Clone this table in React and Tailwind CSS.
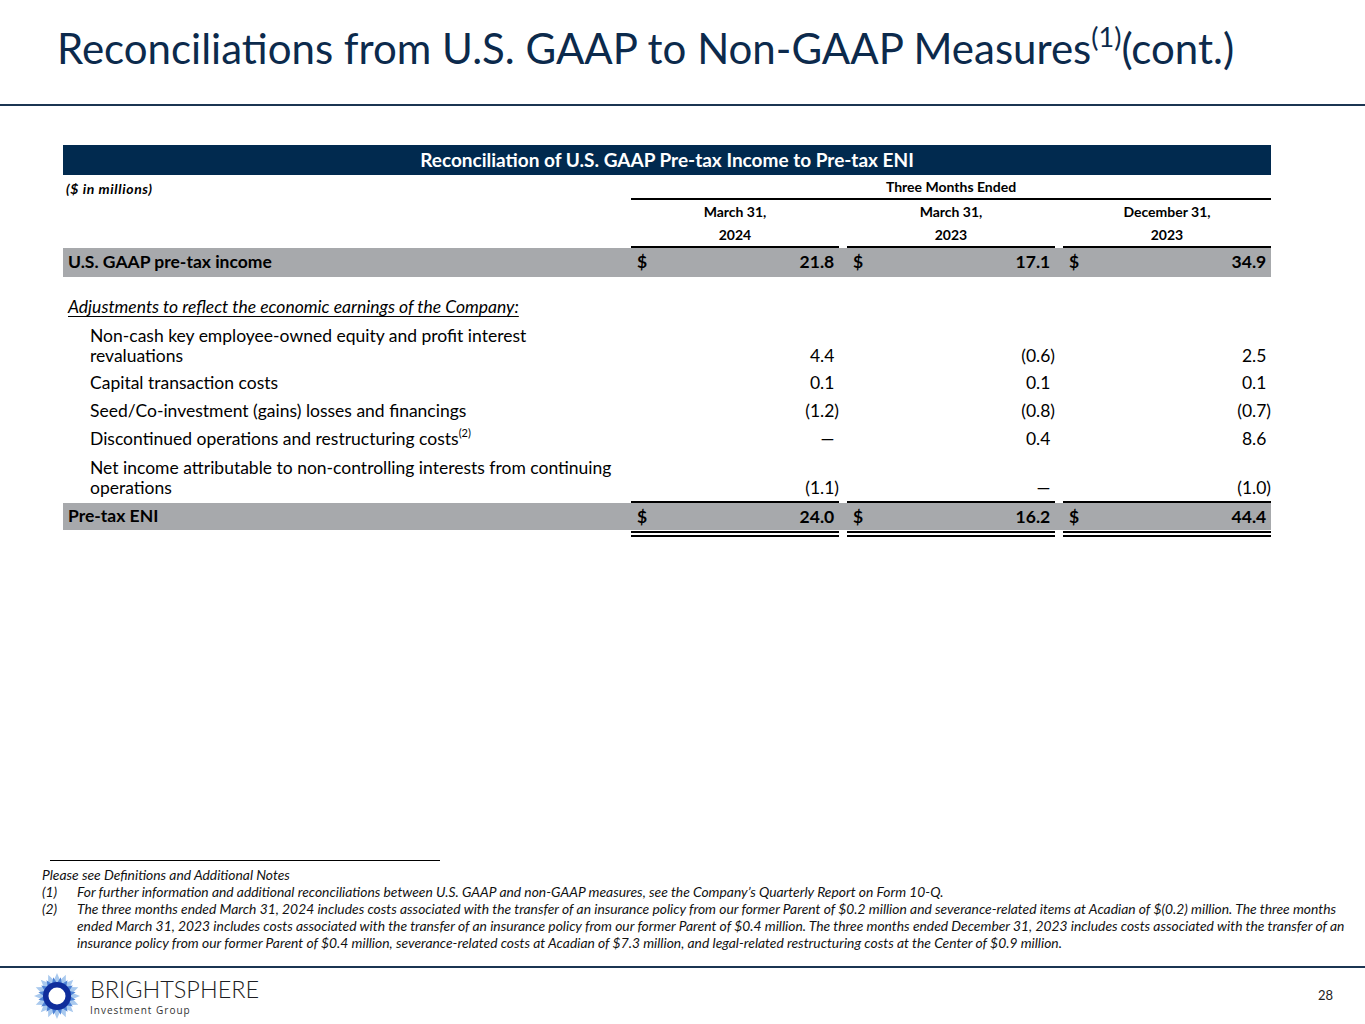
import React from 'react';

const cols = 'grid grid-cols-[560px_208px_208px_208px] gap-x-[8px]';

function Num({ v }) {
  if (v.endsWith(')')) return <span>{v}</span>;
  return (
    <span>
      {v}
      <span className="invisible">)</span>
    </span>
  );
}

function Logo() {
  const star = (n, ro, ri, rot) => {
    const pts = [];
    for (let i = 0; i < n * 2; i++) {
      const r = i % 2 === 0 ? ro : ri;
      const a = (Math.PI * i) / n + rot;
      pts.push(`${(24 + r * Math.sin(a)).toFixed(2)},${(24 - r * Math.cos(a)).toFixed(2)}`);
    }
    return pts.join(' ');
  };
  return (
    <svg width="48" height="48" viewBox="0 0 48 48">
      <polygon points={star(16, 23, 16, 0)} fill="#a9c9ee" />
      <polygon points={star(16, 19, 13, Math.PI / 16)} fill="#4d82d6" />
      <circle cx="24" cy="24" r="14" fill="#0f2d9c" />
      <circle cx="24" cy="24" r="8.5" fill="#ffffff" />
    </svg>
  );
}

const adjustments = [
  { label: ['Non-cash key employee-owned equity and profit interest', 'revaluations'], v: ['4.4', '(0.6)', '2.5'] },
  { label: ['Capital transaction costs'], v: ['0.1', '0.1', '0.1'] },
  { label: ['Seed/Co-investment (gains) losses and financings'], v: ['(1.2)', '(0.8)', '(0.7)'] },
  { label: ['Discontinued operations and restructuring costs'], sup: '(2)', v: ['—', '0.4', '8.6'] },
  {
    label: ['Net income attributable to non-controlling interests from continuing', 'operations'],
    v: ['(1.1)', '—', '(1.0)'],
  },
];

export default function App() {
  return (
    <div className="w-[1365px] h-[1024px] bg-white flex flex-col text-black font-['Lato',sans-serif] overflow-hidden">
      {/* Title */}
      <div className="h-[104px] pl-[57px] pt-[20px]">
        <h1 className="text-[42px] leading-[56px] text-[#0c2a4c] whitespace-nowrap">
          Reconciliations from U.S. GAAP to Non-GAAP Measures
          <sup className="text-[27px] relative -top-[17px]">(1)</sup>(cont.)
        </h1>
      </div>
      <div className="h-[2px] bg-[#1b3552]" />

      {/* Table */}
      <div className="ml-[63px] w-[1208px] mt-[39px]">
        <div className="h-[30px] bg-[#012a4f] flex items-center justify-center text-white font-bold text-[19px]">
          Reconciliation of U.S. GAAP Pre-tax Income to Pre-tax ENI
        </div>

        <div className={`${cols} h-[25px] items-end text-[14px] font-bold`}>
          <div className="italic self-center pt-[1px] pl-[3px] tracking-[0.6px]">($ in millions)</div>
          <div className="col-span-3 h-full border-b-2 border-black flex items-center justify-center">
            Three Months Ended
          </div>
        </div>

        <div className={`${cols} h-[23px] text-[14px] font-bold`}>
          <div />
          <div className="flex items-center justify-center">March 31,</div>
          <div className="flex items-center justify-center">March 31,</div>
          <div className="flex items-center justify-center">December 31,</div>
        </div>
        <div className={`${cols} h-[25px] text-[14px] font-bold`}>
          <div />
          <div className="flex items-center justify-center border-b-2 border-black">2024</div>
          <div className="flex items-center justify-center border-b-2 border-black">2023</div>
          <div className="flex items-center justify-center border-b-2 border-black">2023</div>
        </div>

        <div className={`${cols} h-[29px] bg-[#a7a9ac] text-[17.5px] font-bold items-center`}>
          <div className="pl-[5px]">U.S. GAAP pre-tax income</div>
          {['21.8', '17.1', '34.9'].map((v) => (
            <div key={v} className="flex justify-between pl-[6px]">
              <span>$</span>
              <Num v={v} />
            </div>
          ))}
        </div>

        <div className="h-[16px]" />

        <div className="h-[28px] flex items-center pl-[5px] text-[17.5px] italic underline underline-offset-[3px]">
          Adjustments to reflect the economic earnings of the Company:
        </div>

        {adjustments.map((row, i) => (
          <div
            key={i}
            className={`${cols} text-[17.5px] leading-[20px] ${row.label.length > 1 ? 'items-end pt-[5px] pb-[3px]' : 'h-[28px] items-center'}`}
          >
            <div className="pl-[27px]">
              {row.label.map((l, j) => (
                <div key={j}>
                  {l}
                  {row.sup && <sup className="text-[11px] relative -top-[8px]">{row.sup}</sup>}
                </div>
              ))}
            </div>
            {row.v.map((v, j) => (
              <div key={j} className="text-right">
                <Num v={v} />
              </div>
            ))}
          </div>
        ))}

        <div
          className={`${cols} h-[36px] text-[17.5px] font-bold bg-[linear-gradient(to_bottom,transparent_2px,#a7a9ac_2px,#a7a9ac_29px,transparent_29px)]`}
        >
          <div className="flex items-center pl-[5px] pt-[2px] pb-[7px]">Pre-tax ENI</div>
          {['24.0', '16.2', '44.4'].map((v) => (
            <div
              key={v}
              className="flex justify-between items-center pl-[6px] border-t-2 border-t-black border-b-[6px] border-b-black [border-bottom-style:double]"
            >
              <span>$</span>
              <Num v={v} />
            </div>
          ))}
        </div>
      </div>

      <div className="flex-1" />

      {/* Footnotes */}
      <div className="pl-[42px] text-[13.85px] leading-[17px] italic text-[#111]">
        <div className="w-[390px] ml-[8px] h-px bg-black mb-[5px]" />
        <div>Please see Definitions and Additional Notes</div>
        <div className="flex">
          <span className="w-[35px] shrink-0">(1)</span>
          <span>
            For further information and additional reconciliations between U.S. GAAP and non-GAAP measures, see the
            Company’s Quarterly Report on Form 10-Q.
          </span>
        </div>
        <div className="flex">
          <span className="w-[35px] shrink-0">(2)</span>
          <span className="whitespace-nowrap">
            The three months ended March 31, 2024 includes costs associated with the transfer of an insurance policy from
            our former Parent of $0.2 million and severance-related items at Acadian of $(0.2) million. The three months
            <br />
            ended March 31, 2023 includes costs associated with the transfer of an insurance policy from our former Parent
            of $0.4 million. The three months ended December 31, 2023 includes costs associated with the transfer of an
            <br />
            insurance policy from our former Parent of $0.4 million, severance-related costs at Acadian of $7.3 million,
            and legal-related restructuring costs at the Center of $0.9 million.
          </span>
        </div>
      </div>

      {/* Footer */}
      <div className="h-[2px] bg-[#1b3552] mt-[15px]" />
      <div className="h-[56px] flex items-center pl-[33px] pr-[32px]">
        <Logo />
        <div className="ml-[9px] flex flex-col pt-[2px]">
          <span className="text-[23.5px] leading-[22px] font-light text-[#1d1d22]">BRIGHTSPHERE</span>
          <span className="text-[10px] leading-[13px] mt-[4px] tracking-[1px] text-[#333] font-['Open_Sans',sans-serif]">
            Investment Group
          </span>
        </div>
        <div className="flex-1" />
        <span className="text-[13px] text-[#222]">28</span>
      </div>
    </div>
  );
}
